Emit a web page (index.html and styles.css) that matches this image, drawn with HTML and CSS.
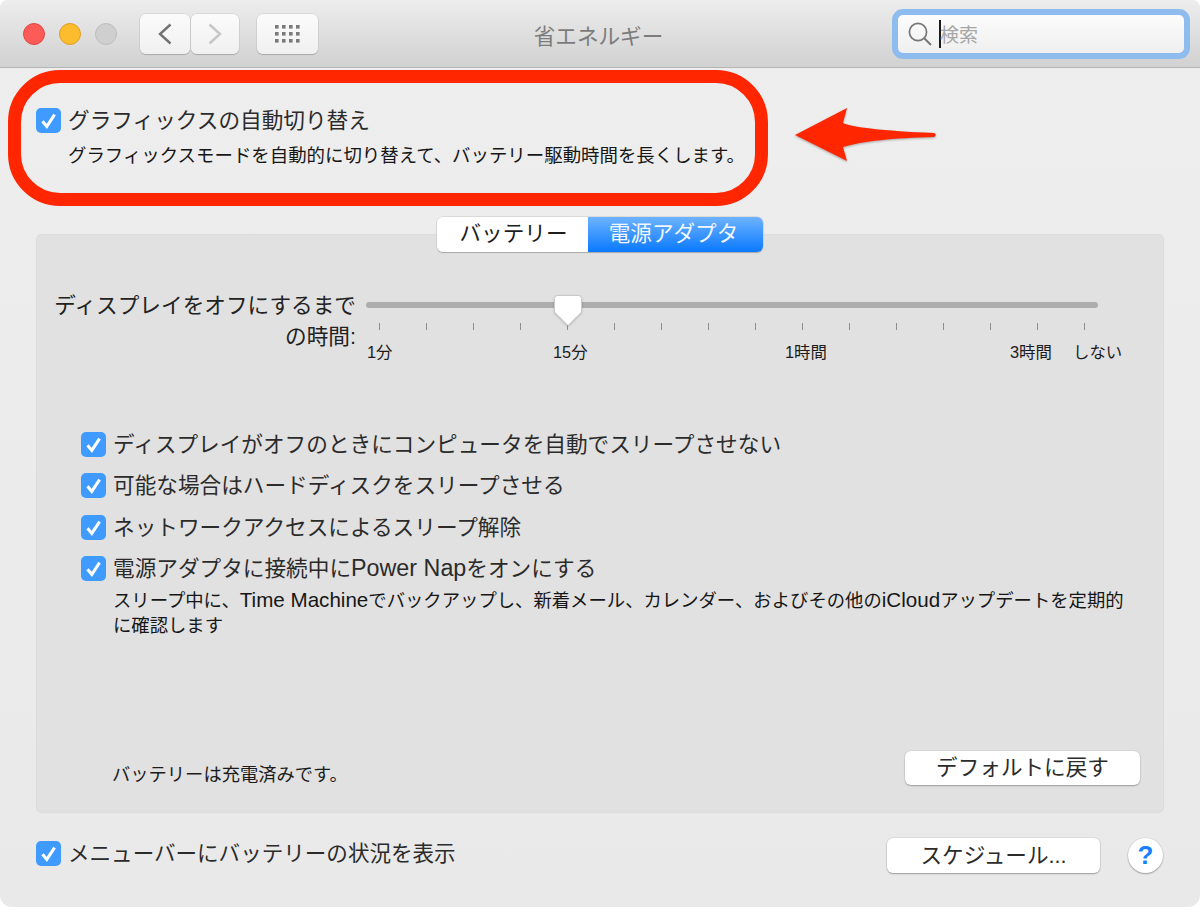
FILE: index.html
```html
<!DOCTYPE html>
<html lang="ja">
<head>
<meta charset="utf-8">
<title>省エネルギー</title>
<link rel="stylesheet" href="styles.css">
</head>
<body>
<svg class="defs" width="0" height="0" aria-hidden="true">
  <symbol id="check" viewBox="0 0 25 25"><path d="M6.5 13.2 L10.8 18.4 L18.6 6.6" fill="none" stroke="#fff" stroke-width="3"/></symbol>
</svg>
<div class="window">
  <header class="titlebar">
    <div class="lights">
      <span class="light red"></span><span class="light yellow"></span><span class="light gray"></span>
    </div>
    <div class="nav">
      <button class="tb-btn back"><svg width="16" height="24" viewBox="0 0 16 24"><path d="M13.5 2.5 L3 12 L13.5 21.5" fill="none" stroke="#727272" stroke-width="2.4"/></svg></button>
      <button class="tb-btn forward"><svg width="16" height="24" viewBox="0 0 16 24"><path d="M2.5 2.5 L13 12 L2.5 21.5" fill="none" stroke="#c6c6c6" stroke-width="2.4"/></svg></button>
    </div>
    <button class="tb-btn grid-btn"><svg width="26" height="18" viewBox="0 0 26 18" fill="#7a7a7a">
      <rect x="0" y="0" width="3.6" height="3.6"/><rect x="7" y="0" width="3.6" height="3.6"/><rect x="14" y="0" width="3.6" height="3.6"/><rect x="21" y="0" width="3.6" height="3.6"/>
      <rect x="0" y="7" width="3.6" height="3.6"/><rect x="7" y="7" width="3.6" height="3.6"/><rect x="14" y="7" width="3.6" height="3.6"/><rect x="21" y="7" width="3.6" height="3.6"/>
      <rect x="0" y="14" width="3.6" height="3.6"/><rect x="7" y="14" width="3.6" height="3.6"/><rect x="14" y="14" width="3.6" height="3.6"/><rect x="21" y="14" width="3.6" height="3.6"/>
    </svg></button>
    <div class="title">省エネルギー</div>
    <div class="search">
      <svg width="26" height="26" viewBox="0 0 26 26"><circle cx="11" cy="11" r="8.6" fill="none" stroke="#777" stroke-width="1.7"/><path d="M17 17 L24 24" stroke="#777" stroke-width="2"/></svg>
      <span class="caret"></span>
      <span class="placeholder">検索</span>
    </div>
  </header>

  <main class="content">
    <section class="top">
      <div class="check-row">
        <span class="cb"><svg width="25" height="25"><use href="#check"/></svg></span>
        <span class="label">グラフィックスの自動切り替え</span>
      </div>
      <p class="desc top-desc">グラフィックスモードを自動的に切り替えて、バッテリー駆動時間を長くします。</p>
      <div class="oval"></div>
      <svg class="arrow" width="150" height="64" viewBox="0 0 150 64"><path d="M2 29 L54 2 L50 17 C58 21 90 25 141 27 Q144.5 29 141 31 C100 32 70 35 50 41 L54 55 Z" fill="#ff2600"/></svg>
    </section>

    <section class="panel">
      <div class="tabs">
        <span class="tab">バッテリー</span>
        <span class="tab active">電源アダプタ</span>
      </div>

      <div class="slider-row">
        <div class="slider-label">ディスプレイをオフにするまで<br>の時間:</div>
        <div class="slider">
          <div class="track"></div>
          <svg class="thumb" width="30" height="33" viewBox="0 0 30 33"><path d="M4.5 1.5 H25.5 Q28.5 1.5 28.5 4.5 V18 L15 31.5 L1.5 18 V4.5 Q1.5 1.5 4.5 1.5 Z" fill="#fff" stroke="#c9c9c9" stroke-width="1"/></svg>
          <div class="ticks">
            <i></i><i></i><i></i><i></i><i></i><i></i><i></i><i></i><i></i><i></i><i></i><i></i><i></i><i></i><i></i><i></i>
          </div>
          <div class="scale">
            <span>1分</span><span>15分</span><span>1時間</span><span>3時間</span><span>しない</span>
          </div>
        </div>
      </div>

      <div class="options">
        <div class="check-row opt">
          <span class="cb"><svg width="25" height="25"><use href="#check"/></svg></span>
          <span class="label">ディスプレイがオフのときにコンピュータを自動でスリープさせない</span>
        </div>
        <div class="check-row opt">
          <span class="cb"><svg width="25" height="25"><use href="#check"/></svg></span>
          <span class="label">可能な場合はハードディスクをスリープさせる</span>
        </div>
        <div class="check-row opt">
          <span class="cb"><svg width="25" height="25"><use href="#check"/></svg></span>
          <span class="label">ネットワークアクセスによるスリープ解除</span>
        </div>
        <div class="check-row opt">
          <span class="cb"><svg width="25" height="25"><use href="#check"/></svg></span>
          <span class="label">電源アダプタに接続中に<span class="latin">Power Nap</span>をオンにする</span>
        </div>
        <p class="desc opt-desc">スリープ中に、<span class="latin">Time Machine</span>でバックアップし、新着メール、カレンダー、およびその他の<span class="latin">iCloud</span>アップデートを定期的<br>に確認します</p>
      </div>

      <div class="panel-foot">
        <span class="status">バッテリーは充電済みです。</span>
        <button class="btn default-btn">デフォルトに戻す</button>
      </div>
    </section>

    <footer class="foot">
      <div class="check-row">
        <span class="cb"><svg width="25" height="25"><use href="#check"/></svg></span>
        <span class="label foot-label">メニューバーにバッテリーの状況を表示</span>
      </div>
      <div class="foot-right">
        <button class="btn schedule-btn">スケジュール...</button>
        <span class="help">?</span>
      </div>
    </footer>
  </main>
</div>
</body>
</html>
```
FILE: styles.css
```css
* { box-sizing: border-box; }
html, body { margin: 0; padding: 0; background: #fff; }
body { font-family: "Liberation Sans", "Noto Sans CJK JP", sans-serif; color: #1c1c1c; width: 1200px; height: 907px; overflow: hidden; }
.defs { position: absolute; }
button { font-family: inherit; padding: 0; margin: 0; }

.window { width: 1200px; height: 907px; background: linear-gradient(#eeeeee, #e9e9e9); border-radius: 8px 8px 12px 12px; overflow: hidden; display: flex; flex-direction: column; }

.titlebar { flex: none; height: 68px; border-bottom: 1px solid #b5b5b5; background: linear-gradient(#ededed, #d1d1d1); display: flex; align-items: flex-start; position: relative; padding: 14px 10px 0 23px; }
.lights { display: flex; gap: 14px; margin-top: 9px; }
.light { width: 22px; height: 22px; border-radius: 50%; border: 1px solid transparent; }
.light.red { background: #fc5b57; border-color: #e14640; }
.light.yellow { background: #fdbc2e; border-color: #dfa023; }
.light.gray { background: #cfcfcf; border-color: #bdbdbd; }

.nav { display: flex; gap: 1px; margin-left: 23px; }
.tb-btn { height: 40px; border: 0; border-radius: 6px; background: linear-gradient(#fbfbfb, #f0f0f0); box-shadow: 0 1px 1px #a9a9a9, 0 0 0 .5px #c8c8c8; display: flex; align-items: center; justify-content: center; }
.back { width: 50px; }
.forward { width: 48px; }
.grid-btn { width: 61px; margin-left: 18px; }

.title { position: absolute; left: 0; top: 22px; padding-left: 397px; text-align: center; width: 800px; font-size: 21.6px; line-height: 30px; color: #7c7c7c; }
.search { margin-left: auto; margin-top: -5px; width: 298px; height: 50px; border: 6px solid #8fbcee; border-radius: 11px; background: linear-gradient(#fcfcfc, #efefef); display: flex; align-items: center; padding-left: 9px; }
.caret { width: 2px; height: 28px; background: #1a1a1a; margin-left: 6px; }
.placeholder { font-size: 19px; color: #a6a6a6; margin: 4px 0 0 -1px; line-height: 28px; }

.content { flex: 1; padding: 40px 36px 0; display: flex; flex-direction: column; }

.top { position: relative; height: 126px; flex: none; }
.check-row { display: flex; align-items: center; height: 25px; gap: 7px; }
.cb { width: 25px; height: 25px; border-radius: 5px; background: #3f9bff; flex: none; display: block; }
.cb svg { display: block; }
.label { font-size: 21.65px; line-height: 25px; color: #2b2b2b; white-space: nowrap; }
.label .latin { font-size: 23.3px; line-height: 20px; }
.foot-label { font-size: 21.55px; }
.desc { margin: 0; line-height: 25px; color: #161616; }
.desc .latin { font-size: 20.6px; line-height: 20px; }
.top-desc { margin: 10px 0 0 32px; font-size: 18.43px; }
.oval { position: absolute; left: -28px; top: -38px; width: 760px; height: 136px; border: 13px solid #ff2600; border-radius: 52px; }
.arrow { position: absolute; left: 757px; top: -2px; filter: drop-shadow(0 1px 1px rgba(0,0,0,.3)); }

.panel { flex: none; height: 579px; background: #e1e1e1; border-radius: 6px; box-shadow: inset 0 0 0 1px #dcdcdc; display: flex; flex-direction: column; padding: 0 24px 0 0; }
.tabs { display: flex; align-self: center; margin: -17px -24px 0 0; height: 35px; width: 326px; border-radius: 6px; overflow: hidden; box-shadow: 0 1px 1px #a8a8a8, 0 0 0 .5px #c8c8c8; flex: none; }
.tab { width: 151px; background: #fff; font-size: 21.6px; line-height: 34px; text-align: center; color: #1c1c1c; padding-left: 2px; }
.tab.active { width: 175px; background: linear-gradient(#6db3ff, #0a79ff); color: #f2f7ff; padding: 0 4px 0 0; }

.slider-row { display: flex; margin-top: 38px; flex: none; }
.slider-label { width: 320px; padding-left: 10px; text-align: right; font-size: 21.65px; line-height: 31px; color: #222; white-space: nowrap; }
.slider { position: relative; margin-left: 10px; width: 756px; padding-top: 12px; }
.track { width: 732px; height: 6px; border-radius: 3px; background: #adadad; }
.thumb { position: absolute; left: 187px; top: 4px; filter: drop-shadow(0 1px 1px rgba(0,0,0,.18)); }
.ticks { display: flex; justify-content: space-between; width: 706px; margin: 15px 0 0 13px; height: 7px; }
.ticks i { display: block; width: 1px; height: 7px; background: #8e8e8e; }
.scale { display: grid; grid-template-columns: 186px 232px 225px 63px auto; margin: 12px 0 0 1px; font-size: 16.4px; line-height: 20px; color: #1c1c1c; white-space: nowrap; }

.options { margin: 70px 0 0 45px; flex: none; }
.opt { margin-bottom: 16.3px; }
.opt .label { color: #2b2b2b; }
.opt-desc { margin: -9px 0 0 32px; width: 1040px; font-size: 18.35px; white-space: nowrap; }

.panel-foot { margin: auto 0 0 0; height: 62px; display: flex; justify-content: space-between; align-items: flex-start; padding: 0 0 0 76px; flex: none; }
.status { font-size: 18.3px; line-height: 26px; margin-top: 11px; color: #1c1c1c; }
.btn { border: 0; background: #fff; border-radius: 6px; box-shadow: 0 1px 1.5px #9e9e9e, 0 0 0 .5px #cfcfcf; font-size: 21.6px; color: #2b2b2b; }
.default-btn { width: 235px; height: 34px; line-height: 32px; }

.foot { display: flex; justify-content: space-between; margin-top: 28px; flex: none; }
.foot-right { display: flex; gap: 28px; margin-top: -3px; margin-right: 1px; align-items: flex-start; }
.schedule-btn { width: 213px; height: 35px; line-height: 33px; }
.help { width: 35px; height: 35px; border-radius: 50%; background: #fff; box-shadow: 0 1px 1.5px #9e9e9e, 0 0 0 .5px #cfcfcf; color: #1a7fff; font-size: 26px; font-weight: 700; line-height: 35px; text-align: center; }
```
